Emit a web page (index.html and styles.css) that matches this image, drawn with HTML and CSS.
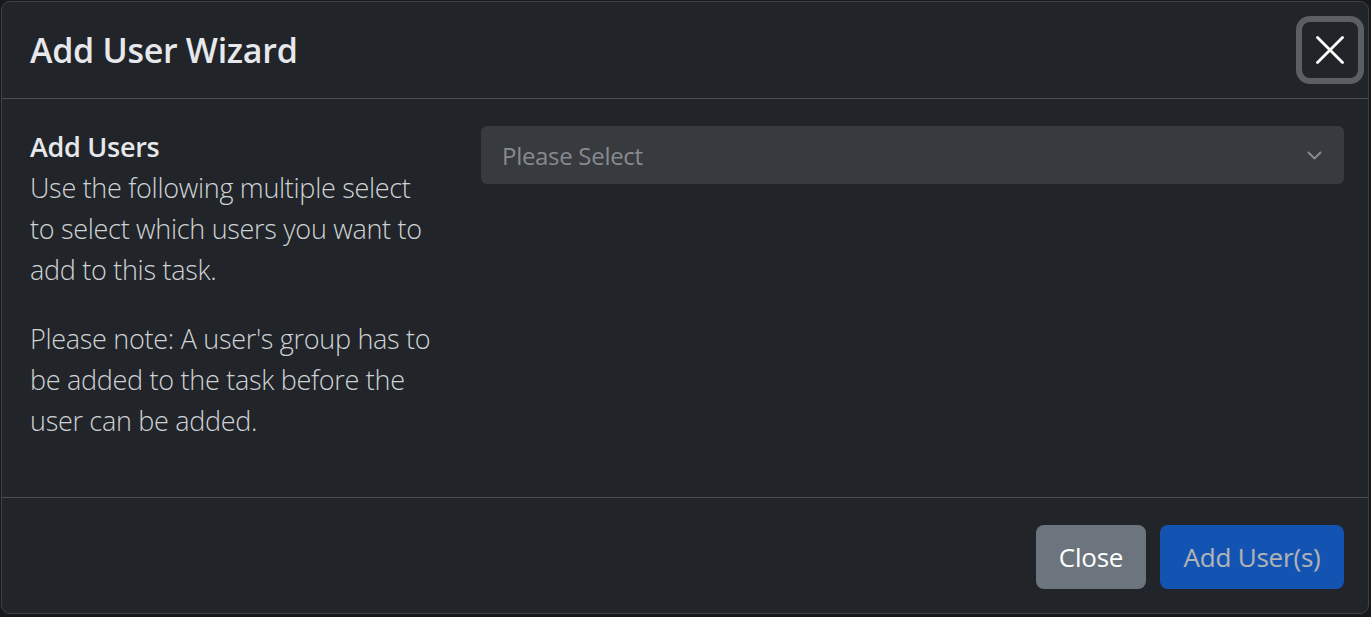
FILE: index.html
```html
<!DOCTYPE html>
<html lang="en">
<head>
<meta charset="utf-8">
<title>Add User Wizard</title>
<link rel="stylesheet" href="styles.css">
</head>
<body>
<div class="modal">
  <header class="modal-header">
    <h5 class="modal-title">Add User Wizard</h5>
    <button class="btn-close" type="button" aria-label="Close">
      <svg viewBox="0 0 28 28" width="28" height="28" aria-hidden="true"><path d="M1.5 1.5 L26.5 26.5 M26.5 1.5 L1.5 26.5" stroke="#ffffff" stroke-width="2.8" stroke-linecap="round" fill="none"/></svg>
    </button>
  </header>
  <section class="modal-body">
    <div class="col-info">
      <p><strong>Add Users</strong><br>Use the following multiple select to select which users you want to add to this task.</p>
      <p>Please note: A user's group has to be added to the task before the user can be added.</p>
    </div>
    <div class="col-select">
      <div class="form-select">
        <span class="placeholder">Please Select</span>
        <svg class="chevron" viewBox="0 0 15 9" width="15" height="9" aria-hidden="true"><path d="M1 1 L7.5 7.5 L14 1" stroke="#8a8e92" stroke-width="1.9" fill="none"/></svg>
      </div>
    </div>
  </section>
  <footer class="modal-footer">
    <button class="btn btn-secondary" type="button">Close</button>
    <button class="btn btn-primary" type="button" disabled>Add User(s)</button>
  </footer>
</div>
</body>
</html>
```

FILE: styles.css
```css
html, body {
  margin: 0;
  padding: 0;
}
body {
  background: #17191c;
  font-family: "Open Sans", "Noto Sans", sans-serif;
  color: #dee2e6;
  padding: 1px 2px 3px 1px;
}
.modal {
  background: #212529;
  border: 1px solid #3d4044;
  border-radius: 9px;
  height: 611px;
  display: flex;
  flex-direction: column;
}
.modal-header {
  height: 96px;
  display: flex;
  align-items: center;
  justify-content: space-between;
  padding: 0 10px 0 28px;
  border-bottom: 1px solid #4b4f53;
}
.modal-title {
  margin: 0;
  font-size: 34px;
  font-weight: 600;
  color: #e6e8eb;
  letter-spacing: -0.3px;
}
.btn-close {
  width: 56px;
  height: 56px;
  border: 0;
  padding: 0;
  border-radius: 8px;
  background: #212529;
  box-shadow: 0 0 0 6px #5b5f63;
  display: flex;
  align-items: center;
  justify-content: center;
}
.modal-body {
  flex: 1;
  display: flex;
  gap: 41px;
  padding: 27px 24px 27px 28px;
}
.col-info {
  width: 410px;
  flex: none;
  font-size: 27px;
  font-weight: 300;
  line-height: 41px;
  color: #cfd2d5;
  letter-spacing: -0.3px;
}
.col-info p {
  margin: 0 0 28px;
}
.col-info strong {
  font-weight: 600;
  color: #e6e8eb;
}
.col-select {
  flex: 1;
}
.form-select {
  height: 58px;
  border-radius: 6px;
  background: #373a3e;
  display: flex;
  align-items: center;
  justify-content: space-between;
  padding: 0 22px 0 21px;
}
.placeholder {
  font-size: 24px;
  color: #878a8e;
  letter-spacing: -0.3px;
}
.modal-footer {
  height: 116px;
  border-top: 1px solid #4b4f53;
  display: flex;
  align-items: center;
  justify-content: flex-end;
  gap: 14px;
  padding: 3px 24px 0 0;
  box-sizing: border-box;
}
.btn {
  height: 64px;
  border: 0;
  border-radius: 8px;
  font-family: "Open Sans", "Noto Sans", sans-serif;
  font-size: 26px;
  font-weight: 400;
  letter-spacing: -0.2px;
  color: #ffffff;
  padding: 0 10px;
}
.btn-secondary {
  background: #6c757d;
  width: 110px;
}
.btn-primary {
  background: #0d6efd;
  width: 184px;
  opacity: 0.65;
}
```
